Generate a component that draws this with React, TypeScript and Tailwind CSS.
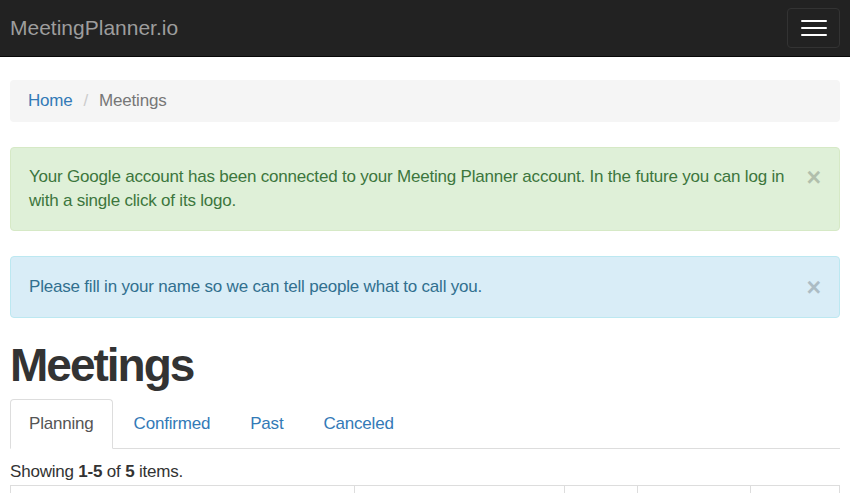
const tabs = ['Planning', 'Confirmed', 'Past', 'Canceled'];
const cols = [344, 211, 73, 113, 89];

function CloseX() {
  return (
    <button className="h-6 shrink-0 text-[25px] font-bold leading-6 text-black opacity-20">×</button>
  );
}

export default function App() {
  return (
    <div className="min-h-screen bg-white font-['Liberation_Sans',Arial,sans-serif] text-[17px] leading-6 tracking-[-0.2px] text-[#333]">
      <nav className="flex h-[57px] items-center justify-between border-b border-[#080808] bg-[#222] px-[10px]">
        <span className="text-[21px] tracking-[0px] text-[#9d9d9d]">MeetingPlanner.io</span>
        <button className="flex h-[40px] w-[53px] flex-col items-center justify-center gap-[5px] rounded border border-[#333]">
          <span className="h-[2px] w-[26px] rounded-sm bg-white" />
          <span className="h-[2px] w-[26px] rounded-sm bg-white" />
          <span className="h-[2px] w-[26px] rounded-sm bg-white" />
        </button>
      </nav>

      <div className="px-[10px]">
        <ol className="mt-[23px] flex items-center rounded bg-[#f5f5f5] px-[18px] py-[9px]">
          <li className="text-[#337ab7]">Home</li>
          <li className="px-[11px] text-[#ccc]">/</li>
          <li className="text-[#777]">Meetings</li>
        </ol>

        <div className="mt-[25px] flex items-start gap-4 rounded border border-[#d6e9c6] bg-[#dff0d8] py-[17px] pl-[18px] pr-[18px] text-[#3c763d]">
          <p className="flex-1">
            Your Google account has been connected to your Meeting Planner account. In the future you can log in with a single click of its logo.
          </p>
          <CloseX />
        </div>

        <div className="mt-[25px] flex items-center gap-4 rounded border border-[#bce8f1] bg-[#d9edf7] py-[18px] pl-[18px] pr-[18px] text-[#31708f]">
          <p className="flex-1">Please fill in your name so we can tell people what to call you.</p>
          <CloseX />
        </div>

        <h1 className="mt-[22px] text-[46px] font-bold leading-[1.1] tracking-[-2px] text-[#333]">Meetings</h1>

        <ul className="mt-[8px] flex border-b border-[#ddd]">
          {tabs.map((t, i) => (
            <li key={t} className="-mb-px mr-[2px]">
              <span
                className={
                  i === 0
                    ? 'block rounded-t border border-[#ddd] border-b-white bg-white px-[18px] py-[12px] text-[#555]'
                    : 'block border border-transparent px-[18px] py-[12px] text-[#337ab7]'
                }
              >
                {t}
              </span>
            </li>
          ))}
        </ul>

        <p className="mt-[11px]">
          Showing <b>1-5</b> of <b>5</b> items.
        </p>

        <table className="mt-px w-full border-collapse border border-[#ddd]">
          <thead>
            <tr className="h-[40px]">
              {cols.map((w, i) => (
                <th key={i} style={{ width: w }} className="border border-[#ddd]" />
              ))}
            </tr>
          </thead>
        </table>
      </div>
    </div>
  );
}
